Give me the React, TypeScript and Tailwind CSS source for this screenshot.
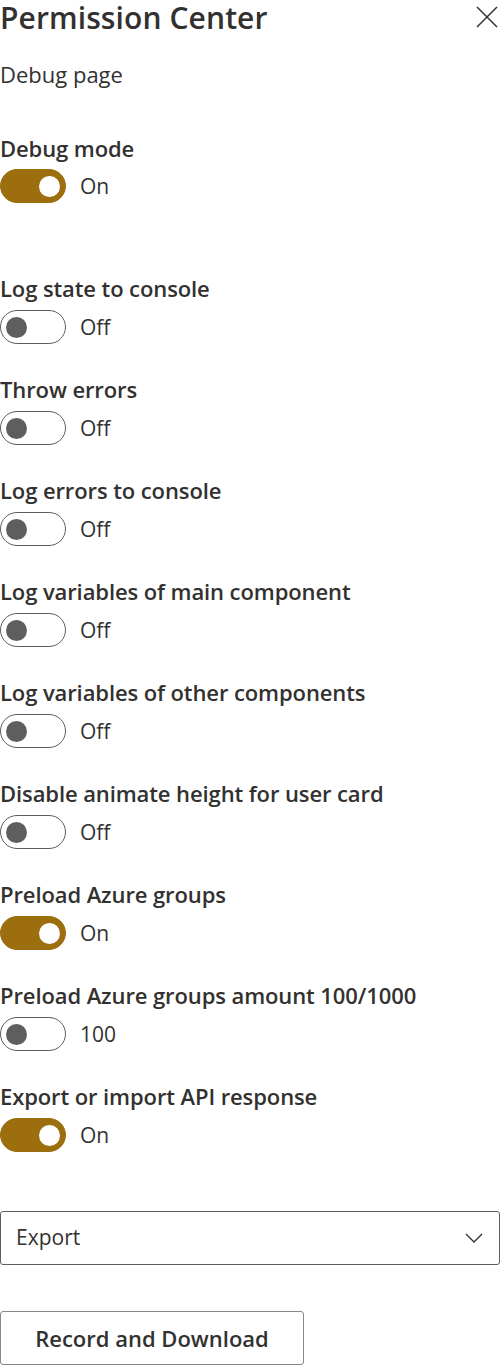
import { useState } from 'react';

type Item = { label: string; on: boolean; onText?: string; offText?: string };

const items: Item[] = [
  { label: 'Log state to console', on: false },
  { label: 'Throw errors', on: false },
  { label: 'Log errors to console', on: false },
  { label: 'Log variables of main component', on: false },
  { label: 'Log variables of other components', on: false },
  { label: 'Disable animate height for user card', on: false },
  { label: 'Preload Azure groups', on: true },
  { label: 'Preload Azure groups amount 100/1000', on: false, onText: '1000', offText: '100' },
  { label: 'Export or import API response', on: true },
];

function Toggle({ on, onText = 'On', offText = 'Off', onClick }: { on: boolean; onText?: string; offText?: string; onClick: () => void }) {
  return (
    <button onClick={onClick} className="flex items-center gap-[14px] h-[34px]">
      <span
        className={`w-[66px] h-[34px] rounded-full flex items-center px-[5px] border ${
          on ? 'bg-[#9c6e0e] border-[#9c6e0e] justify-end' : 'bg-white border-[#605e5c] justify-start'
        }`}
      >
        <span className={`w-[21px] h-[21px] rounded-full ${on ? 'bg-white' : 'bg-[#605e5c]'}`} />
      </span>
      <span className="text-[21px] text-[#323130] leading-none">{on ? onText : offText}</span>
    </button>
  );
}

export default function App() {
  const [debug, setDebug] = useState(true);
  const [vals, setVals] = useState(items.map(i => i.on));

  return (
    <div className="w-[502px] bg-white text-[#323130] font-['Open_Sans',sans-serif]">
      {/* Header */}
      <div className="flex items-center justify-between h-[36px]">
        <h1 className="text-[30px] leading-[30px] font-semibold tracking-[0.1px]">Permission Center</h1>
        <button className="mr-[4px] mb-[2px] w-[22px] h-[22px]">
          <svg viewBox="0 0 22 22" className="w-[22px] h-[22px]" fill="none" stroke="#323130" strokeWidth="1.5">
            <path d="M1 1L21 21M21 1L1 21" />
          </svg>
        </button>
      </div>

      <p className="mt-[23px] text-[22px] leading-[30px] tracking-[0px]">Debug page</p>

      <div className="mt-[44px]">
        <label className="block text-[22px] leading-[30px] font-semibold tracking-[-0.1px]">Debug mode</label>
        <div className="mt-[6px]">
          <Toggle on={debug} onClick={() => setDebug(!debug)} />
        </div>
      </div>

      <div className="mt-[70px] flex flex-col gap-[30px]">
        {items.map((it, i) => (
          <div key={it.label}>
            <label className="block text-[22px] leading-[30px] font-semibold tracking-[-0.1px]">{it.label}</label>
            <div className="mt-[7px]">
              <Toggle
                on={vals[i]}
                onText={it.onText}
                offText={it.offText}
                onClick={() => setVals(v => v.map((x, j) => (j === i ? !x : x)))}
              />
            </div>
          </div>
        ))}
      </div>

      {/* Export dropdown */}
      <div className="mt-[59px] h-[54px] w-[500px] border border-[#605e5c] rounded-[3px] flex items-center justify-between pl-[15px] pr-[16px]">
        <span className="text-[21px]">Export</span>
        <svg viewBox="0 0 18 10" className="w-[18px] h-[10px]" fill="none" stroke="#323130" strokeWidth="1.3">
          <path d="M1 1L9 9L17 1" />
        </svg>
      </div>

      <button className="mt-[46px] h-[54px] w-[304px] border border-[#8a8886] rounded-[3px] text-[22px] font-semibold">
        Record and Download
      </button>
    </div>
  );
}
